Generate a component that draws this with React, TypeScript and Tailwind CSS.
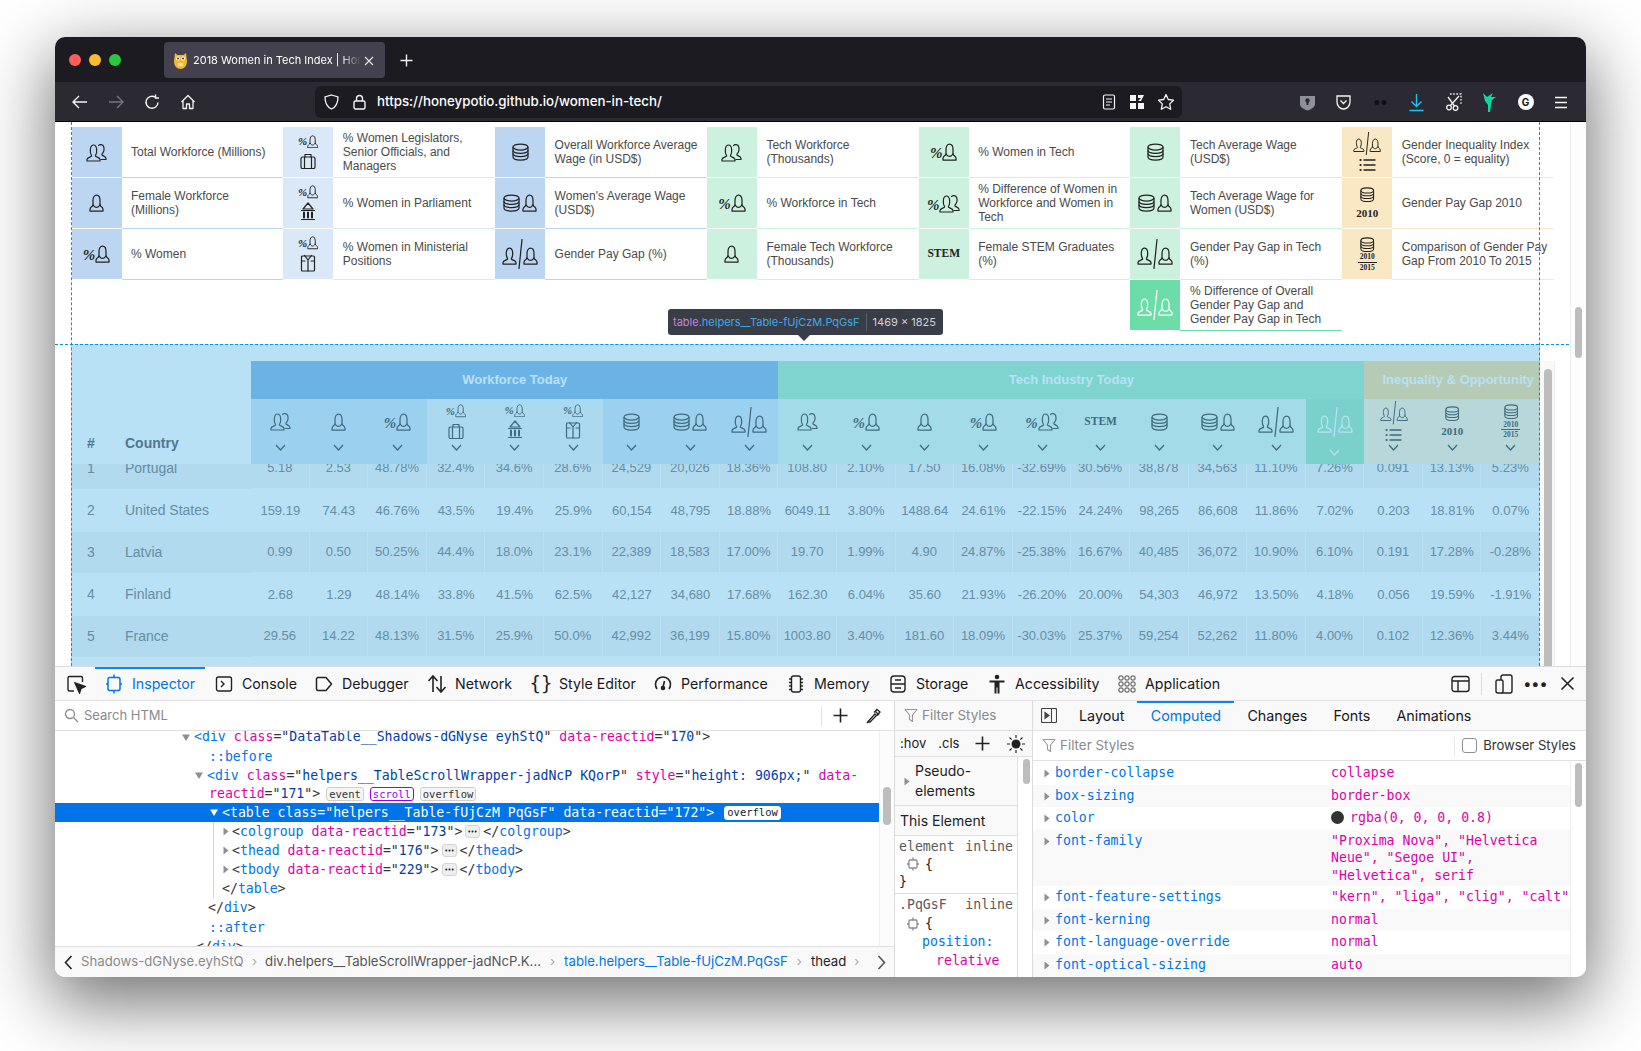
import React from "react";

const Sv = ({ w, h, children, sw = 1.2, className = "" }: { w: number; h: number; children: React.ReactNode; sw?: number; className?: string }) => (
  <svg width={w} height={h} viewBox={`0 0 ${w} ${h}`} fill="none" stroke="currentColor" strokeWidth={sw} strokeLinecap="round" strokeLinejoin="round" className={`shrink-0 ${className}`}>
    {children}
  </svg>
);
const WomanP = () => (
  <>
    <path d="M4 11.5V6.5C4 3.2 5.5 1 7.5 1S11 3.2 11 6.5V11.5" />
    <path d="M4 11C3.5 12.8 1 13 1 15.2V17H14V15.2C14 13 11.5 12.8 11 11" />
    <path d="M4.5 11.5C5.5 13 6.5 13.4 7.5 13.4S9.5 13 10.5 11.5" />
  </>
);
const ManP = () => <path d="M5.5 11.3C3.8 9 3.5 1 7.5 1S11.2 9 9.5 11.3V12.2C10.5 13.2 14 13.5 14 15.5V17H1V15.5C1 13.5 4.5 13.2 5.5 12.2Z" />;
const TwoP = () => (
  <>
    <g transform="translate(0 1)"><ManP /></g>
    <path d="M12.5 2.5C13.5 1.2 17 0.8 17.8 4 18.5 7 17.5 9.5 16 11V12C17 13 20 13.5 20 15.5V16.5H15" />
  </>
);
const CoinsP = () => (
  <>
    <ellipse cx="8.5" cy="4" rx="7.5" ry="3" />
    <path d="M1 4V14C1 15.7 4.4 17 8.5 17S16 15.7 16 14V4" />
    <path d="M1 7.3C1 9 4.4 10.3 8.5 10.3S16 9 16 7.3" />
    <path d="M1 10.6C1 12.3 4.4 13.6 8.5 13.6S16 12.3 16 10.6" />
  </>
);
const Woman = ({ s = 1 }: { s?: number }) => (
  <svg width={15 * s} height={18 * s} viewBox="0 0 15 18" fill="none" stroke="currentColor" strokeWidth={1.25} strokeLinecap="round" strokeLinejoin="round" className="shrink-0"><WomanP /></svg>
);
const Two = () => <Sv w={21} h={19}><TwoP /></Sv>;
const Coins = ({ s = 1 }: { s?: number }) => (
  <svg width={17 * s} height={18 * s} viewBox="0 0 17 18" fill="none" stroke="currentColor" strokeWidth={1.25} className="shrink-0"><CoinsP /></svg>
);
const Gap = ({ s = 1 }: { s?: number }) => (
  <svg width={36 * s} height={30 * s} viewBox="0 0 36 30" fill="none" stroke="currentColor" strokeWidth={1.25} strokeLinecap="round" strokeLinejoin="round" className="shrink-0">
    <g transform="translate(0 8)"><ManP /></g>
    <path d="M20 0.5L17 29.5" />
    <g transform="translate(21 8)"><WomanP /></g>
  </svg>
);
const Brief = () => (
  <Sv w={16} h={16}><rect x="1" y="4" width="14" height="11.5" rx="1.5" /><path d="M5 4V1.5H11V4M4.5 4V15.5M11.5 4V15.5" /></Sv>
);
const Bank = () => (
  <Sv w={16} h={19}><path d="M8 1L3 7H13Z" /><path d="M1.5 8.5H14.5M1.5 17.5H14.5" /><path d="M4 10.5V15.5M8 10.5V15.5M12 10.5V15.5" strokeWidth={2} /></Sv>
);
const Shirt = () => (
  <Sv w={16} h={18}><rect x="1.5" y="2" width="13" height="15" rx="1" /><path d="M4.5 1.5L8 6 11.5 1.5M8 6V17M1.5 7H5M11 7H14.5" /></Sv>
);
const ListI = () => (
  <Sv w={17} h={14} sw={1.4}><path d="M5 2H16M5 7H16M5 12H16" /><path d="M1.5 2H1.6M1.5 7H1.6M1.5 12H1.6" strokeWidth={2.2} /></Sv>
);
const Pct = ({ big = true }: { big?: boolean }) => (
  <span className={`font-['Liberation_Serif',serif] font-bold italic leading-none ${big ? "text-[15px]" : "text-[11px]"}`}>%</span>
);
const YearT = ({ c, t }: { c: string; t: string }) => <span className={`font-['Liberation_Serif',serif] font-bold leading-none ${c}`}>{t}</span>;

type Kind = "two" | "woman" | "pct" | "pctBrief" | "pctBank" | "pctShirt" | "coins" | "coinsW" | "gap" | "pctTwo" | "stem" | "gapList" | "c2010" | "c2015";

const SmallPct = () => (
  <div className="flex items-center"><Pct big={false} /><Woman s={0.75} /></div>
);
const Glyph = ({ k }: { k: Kind }) => {
  switch (k) {
    case "two": return <Two />;
    case "woman": return <Woman />;
    case "pct": return <div className="flex items-end"><Pct /><Woman /></div>;
    case "pctBrief": return <div className="flex flex-col items-center gap-[5px]"><SmallPct /><Brief /></div>;
    case "pctBank": return <div className="flex flex-col items-center gap-[3px]"><SmallPct /><Bank /></div>;
    case "pctShirt": return <div className="flex flex-col items-center gap-[4px]"><SmallPct /><Shirt /></div>;
    case "coins": return <Coins />;
    case "coinsW": return <div className="flex items-end gap-[2px]"><Coins /><Woman /></div>;
    case "gap": return <Gap />;
    case "pctTwo": return <div className="flex items-end"><Pct /><Two /></div>;
    case "stem": return <YearT c="text-[11.5px]" t="STEM" />;
    case "gapList": return <div className="flex flex-col items-center gap-[3px]"><Gap s={0.78} /><ListI /></div>;
    case "c2010": return <div className="flex flex-col items-center gap-[5px]"><Coins s={0.85} /><YearT c="text-[11px]" t="2010" /></div>;
    case "c2015": return (
      <div className="flex flex-col items-center gap-[1px]"><Coins s={0.85} /><YearT c="text-[7.5px]" t="2010" /><div className="w-[19px] h-px bg-current" /><YearT c="text-[7.5px]" t="2015" /></div>
    );
  }
};

const B1 = ["bg-[#bcd6f2]", "border-[#bcd6f2]"];
const B2 = ["bg-[#dbe8f8]", "border-[#dbe8f8]"];
const G1 = ["bg-[#ccf1df]", "border-[#ccf1df]"];
const Y1 = ["bg-[#fae8c4]", "border-[#fae8c4]"];
const legend: [Kind, string, string[]][] = [
  ["two", "Total Workforce (Millions)", B1], ["pctBrief", "% Women Legislators, Senior Officials, and Managers", B2], ["coins", "Overall Workforce Average Wage (in USD$)", B1], ["two", "Tech Workforce (Thousands)", G1], ["pct", "% Women in Tech", G1], ["coins", "Tech Average Wage (USD$)", G1], ["gapList", "Gender Inequality Index (Score, 0 = equality)", Y1],
  ["woman", "Female Workforce (Millions)", B1], ["pctBank", "% Women in Parliament", B2], ["coinsW", "Women's Average Wage (USD$)", B1], ["pct", "% Workforce in Tech", G1], ["pctTwo", "% Difference of Women in Workforce and Women in Tech", G1], ["coinsW", "Tech Average Wage for Women (USD$)", G1], ["c2010", "Gender Pay Gap 2010", Y1],
  ["pct", "% Women", B1], ["pctShirt", "% Women in Ministerial Positions", B2], ["gap", "Gender Pay Gap (%)", B1], ["woman", "Female Tech Workforce (Thousands)", G1], ["stem", "Female STEM Graduates (%)", G1], ["gap", "Gender Pay Gap in Tech (%)", G1], ["c2015", "Comparison of Gender Pay Gap From 2010 To 2015", Y1],
];

const heads: { k: Kind; bg: string; hi?: boolean }[] = [
  { k: "two", bg: "bg-[#d9e8f6]" }, { k: "woman", bg: "bg-[#d9e8f6]" }, { k: "pct", bg: "bg-[#d9e8f6]" },
  { k: "pctBrief", bg: "bg-[#edf5f7]" }, { k: "pctBank", bg: "bg-[#edf5f7]" }, { k: "pctShirt", bg: "bg-[#edf5f7]" },
  { k: "coins", bg: "bg-[#d9e8f6]" }, { k: "coinsW", bg: "bg-[#d9e8f6]" }, { k: "gap", bg: "bg-[#d9e8f6]" },
  { k: "two", bg: "bg-[#e2f8ec]" }, { k: "pct", bg: "bg-[#e2f8ec]" }, { k: "woman", bg: "bg-[#e2f8ec]" }, { k: "pct", bg: "bg-[#e2f8ec]" }, { k: "pctTwo", bg: "bg-[#e2f8ec]" }, { k: "stem", bg: "bg-[#e2f8ec]" }, { k: "coins", bg: "bg-[#e2f8ec]" }, { k: "coinsW", bg: "bg-[#e2f8ec]" }, { k: "gap", bg: "bg-[#e2f8ec]" },
  { k: "gap", bg: "bg-[#a9e9c4]", hi: true },
  { k: "gapList", bg: "bg-[#fef2d8]" }, { k: "c2010", bg: "bg-[#fef2d8]" }, { k: "c2015", bg: "bg-[#fef2d8]" },
];

const rows = [
  ["1", "Portugal", "5.18", "2.53", "48.78%", "32.4%", "34.6%", "28.6%", "24,529", "20,026", "18.36%", "108.80", "2.10%", "17.50", "16.08%", "-32.69%", "30.56%", "38,878", "34,563", "11.10%", "7.26%", "0.091", "13.13%", "5.23%"],
  ["2", "United States", "159.19", "74.43", "46.76%", "43.5%", "19.4%", "25.9%", "60,154", "48,795", "18.88%", "6049.11", "3.80%", "1488.64", "24.61%", "-22.15%", "24.24%", "98,265", "86,608", "11.86%", "7.02%", "0.203", "18.81%", "0.07%"],
  ["3", "Latvia", "0.99", "0.50", "50.25%", "44.4%", "18.0%", "23.1%", "22,389", "18,583", "17.00%", "19.70", "1.99%", "4.90", "24.87%", "-25.38%", "16.67%", "40,485", "36,072", "10.90%", "6.10%", "0.191", "17.28%", "-0.28%"],
  ["4", "Finland", "2.68", "1.29", "48.14%", "33.8%", "41.5%", "62.5%", "42,127", "34,680", "17.68%", "162.30", "6.04%", "35.60", "21.93%", "-26.20%", "20.00%", "54,303", "46,972", "13.50%", "4.18%", "0.056", "19.59%", "-1.91%"],
  ["5", "France", "29.56", "14.22", "48.13%", "31.5%", "25.9%", "50.0%", "42,992", "36,199", "15.80%", "1003.80", "3.40%", "181.60", "18.09%", "-30.03%", "25.37%", "59,254", "52,262", "11.80%", "4.00%", "0.102", "12.36%", "3.44%"],
];

const Chev = ({ c = "" }: { c?: string }) => (
  <svg width="11" height="7" viewBox="0 0 11 7" fill="none" stroke="currentColor" strokeWidth="1.2" className={c}><path d="M1 1L5.5 6 10 1" /></svg>
);

const T = ({ children }: { children: React.ReactNode }) => <span className="text-[#0074e8]">{children}</span>;
const A = ({ children }: { children: React.ReactNode }) => <span className="text-[#dd00a9]">{children}</span>;
const V = ({ children }: { children: React.ReactNode }) => <span className="text-[#003eaa]">{children}</span>;
const Tri = ({ open, c = "text-[#8f8f8f]" }: { open?: boolean; c?: string }) => (
  <svg width="8" height="9" viewBox="0 0 8 9" fill="currentColor" className={`shrink-0 ${c}`}>{open ? <path d="M0 1.5H8L4 8Z" /> : <path d="M1.5 0.5V8.5L6.5 4.5Z" />}</svg>
);
const Badge = ({ children, c = "border-[#cfcfcf] bg-[#f5f5f5] text-[#333]" }: { children: React.ReactNode; c?: string }) => (
  <span className={`inline-flex items-center h-[14px] px-[2px] ml-[6px] border rounded-[3px] text-[10.5px] leading-none ${c}`}>{children}</span>
);
const Dots = () => (
  <span className="inline-flex items-center justify-center w-[15px] h-[13px] mx-[1px] rounded-[3px] border border-[#d5d5d5] bg-[#eee]">
    <svg width="9" height="3" viewBox="0 0 9 3" fill="#222"><circle cx="1.3" cy="1.5" r="1" /><circle cx="4.500" cy="1.5" r="1" /><circle cx="7.700" cy="1.5" r="1" /></svg>
  </span>
);
const Funnel = () => (
  <svg width="14" height="15" viewBox="0 0 14 15" fill="none" stroke="#9a9a9a" strokeWidth="1.1" strokeLinejoin="round" className="shrink-0"><path d="M1 1.5H13L8.5 7V13.5L5.5 11.5V7Z" /></svg>
);
const NodeI = () => (
  <svg width="12" height="14" viewBox="0 0 12 14" fill="none" stroke="#8a8a8a" strokeWidth="1.3" className="shrink-0"><rect x="2" y="3" width="8" height="8" rx="1" /><path d="M6 0.5V3M6 11V13.5M0 7H2M10 7H12" /></svg>
);

const Tab = ({ w, icon, label, active }: { w: number; icon: React.ReactNode; label: string; active?: boolean }) => (
  <div style={{ width: w }} className={`relative flex items-center h-full shrink-0 pl-[9px] gap-[8px] ${active ? "text-[#0074e8]" : "text-[#18181a]"}`}>
    {active && <div className="absolute left-0 right-0 top-0 h-[2px] bg-[#0a84ff]" />}
    <span className="flex w-[20px] justify-center shrink-0">{icon}</span>
    <span>{label}</span>
  </div>
);

const comp: [string, string[], boolean][] = [
  ["border-collapse", ["collapse"], false],
  ["box-sizing", ["border-box"], true],
  ["color", ["rgba(0, 0, 0, 0.8)"], false],
  ["font-family", ['"Proxima Nova", "Helvetica', 'Neue", "Segoe UI",', '"Helvetica", serif'], true],
  ["font-feature-settings", ['"kern", "liga", "clig", "calt"'], false],
  ["font-kerning", ["normal"], true],
  ["font-language-override", ["normal"], false],
  ["font-optical-sizing", ["auto"], true],
];

export default function App() {
  return (
    <div className="w-[1641px] h-[1051px] overflow-hidden bg-white pt-[37px] pl-[55px]">
      <div className="w-[1531px] h-[940px] flex flex-col rounded-[10px] overflow-hidden shadow-[0_22px_70px_4px_rgba(0,0,0,0.56)] bg-white font-['Inter',sans-serif]">
        {/* tab bar */}
        <div className="h-[45px] shrink-0 bg-[#1c1b22] flex items-start relative">
          <div className="flex items-center gap-[8px] pl-[14px] h-[45px] shrink-0">
            <span className="w-[12px] h-[12px] rounded-full bg-[#ff5f57] mt-[1px]" />
            <span className="w-[12px] h-[12px] rounded-full bg-[#febc2e] mt-[1px]" />
            <span className="w-[12px] h-[12px] rounded-full bg-[#28c840] mt-[1px]" />
          </div>
          <div className="ml-[43px] mt-[5px] w-[221px] h-[36px] bg-[#42414d] rounded-[4px] flex items-center pl-[9px] pr-[11px] pt-[1px] text-white text-[11px] shrink-0">
            <svg width="15" height="19" viewBox="0 0 15 19" className="shrink-0">
              <path d="M2 2L4.5 4H10.5L13 2 14 10C14 15 11 18 7.500 18S1 15 1 10Z" fill="#f5b731" />
              <circle cx="5" cy="7.500" r="2" fill="#fff" /><circle cx="10" cy="7.500" r="2" fill="#fff" />
              <circle cx="5" cy="7.500" r="1" fill="#333" /><circle cx="10" cy="7.500" r="1" fill="#333" />
              <path d="M5 12H10V15H5Z" fill="#fbe2a0" />
            </svg>
            <span className="ml-[5px] w-[168px] overflow-hidden whitespace-nowrap [mask-image:linear-gradient(to_right,black_88%,transparent)]">2018 Women in Tech Index | Honeypot</span>
            <svg width="10" height="10" viewBox="0 0 10 10" stroke="#e8e8e8" strokeWidth="1.1" className="ml-auto shrink-0"><path d="M1 1L9 9M9 1L1 9" /></svg>
          </div>
          <svg width="13" height="13" viewBox="0 0 13 13" stroke="#f0f0f0" strokeWidth="1.4" className="ml-[15px] mt-[17px]"><path d="M6.500 0.500V12.500M0.500 6.500H12.500" /></svg>
        </div>
        {/* nav bar */}
        <div className="h-[40px] shrink-0 bg-[#2b2a33] border-b border-black flex items-center pt-[1px] text-[#f5f5f5]">
          <div className="flex items-center gap-[20px] pl-[17px] w-[260px] shrink-0">
            <svg width="16" height="14" viewBox="0 0 16 14" fill="none" stroke="currentColor" strokeWidth="1.4"><path d="M15 7H1.500M7 1L1 7l6 6" /></svg>
            <svg width="16" height="14" viewBox="0 0 16 14" fill="none" stroke="#77767e" strokeWidth="1.4"><path d="M1 7H14.500M9 1l6 6-6 6" /></svg>
            <svg width="16" height="16" viewBox="0 0 16 16" fill="none" stroke="currentColor" strokeWidth="1.4"><path d="M14 8.500A6 6 0 1 1 11 3M11.500 0.500V4H15" /></svg>
            <svg width="16" height="16" viewBox="0 0 16 16" fill="none" stroke="currentColor" strokeWidth="1.3" strokeLinejoin="round"><path d="M1.500 8L8 1.500 14.500 8M3 7V14.500H6.500V10H9.500V14.500H13V7" /></svg>
          </div>
          <div className="h-[32px] w-[867px] shrink-0 bg-[#1c1b22] rounded-[6px] flex items-center pl-[9px] pr-[7px]">
            <svg width="15" height="16" viewBox="0 0 15 16" fill="none" stroke="currentColor" strokeWidth="1.3" className="shrink-0"><path d="M7.500 1L14 3C14 9 12 13 7.500 15 3 13 1 9 1 3Z" /></svg>
            <svg width="13" height="16" viewBox="0 0 13 16" fill="none" stroke="currentColor" strokeWidth="1.4" className="shrink-0 ml-[14px]"><rect x="1" y="7" width="11" height="8" rx="1.500" /><path d="M3.500 7V4.500a3 3 0 0 1 6 0V7" /></svg>
            <span className="ml-[11px] text-[13.3px] font-medium text-white">https://honeypotio.github.io/women-in-tech/</span>
            <div className="ml-auto flex items-center gap-[12px]">
              <svg width="16" height="16" viewBox="0 0 16 16" fill="none" stroke="currentColor" strokeWidth="1.2"><rect x="2.500" y="1" width="11" height="14" rx="1.500" /><path d="M5 5H11M5 8H11M5 11H9" /></svg>
              <svg width="16" height="16" viewBox="0 0 16 16" fill="currentColor"><path d="M1 1H7V7H1ZM1 9H7V15H1ZM9 9H15V15H9ZM9 7L12 4H9V1L15 1 12 7Z" /></svg>
              <svg width="18" height="18" viewBox="0 0 18 18" fill="none" stroke="currentColor" strokeWidth="1.3" strokeLinejoin="round"><path d="M9 1.500L11.300 6.500 16.500 7.200 12.700 10.900 13.700 16.300 9 13.700 4.300 16.300 5.300 10.900 1.500 7.200 6.700 6.500Z" /></svg>
            </div>
          </div>
          <div className="flex-1 flex items-center justify-end gap-[19.5px] pr-[17px]">
            <svg width="17" height="17" viewBox="0 0 17 17" fill="#8f8f96"><path d="M1 2H16V10C16 13 13 15 8.500 16.500 4 15 1 13 1 10Z" /><circle cx="8.500" cy="6.500" r="2.200" fill="#2b2a33" /><path d="M7.500 7H9.500V11H7.500Z" fill="#2b2a33" /></svg>
            <svg width="17" height="17" viewBox="0 0 17 17" fill="none" stroke="currentColor" strokeWidth="1.3"><path d="M2 2H15a1 1 0 0 1 0 1V8C15 12 12 15 8.500 15S2 12 2 8V3Z" /><path d="M5.500 6.500L8.500 9.500 11.500 6.500" /></svg>
            <svg width="17" height="17" viewBox="0 0 17 17" fill="#101014"><circle cx="5" cy="8.500" r="2.500" /><circle cx="12" cy="8.500" r="2.500" /></svg>
            <svg width="17" height="19" viewBox="0 0 17 19" fill="none" stroke="#20c4f4" strokeWidth="1.4"><path d="M8.500 1V13M3.500 8.500L8.500 13.500 13.500 8.500M1.500 17.500H15.500" /></svg>
            <svg width="17" height="18" viewBox="0 0 17 18" fill="none" stroke="currentColor" strokeWidth="1.3"><path d="M5 1H16V11" strokeDasharray="1.600 1.600" /><circle cx="4" cy="14.500" r="2.300" /><circle cx="10.500" cy="15" r="2.300" /><path d="M5.500 12.500L14 3M9.500 13L3 4" /></svg>
            <svg width="17" height="21" viewBox="0 0 17 21" fill="#12d6a0"><path d="M2 1L6 5 9 3 12 1 10 5 15 5 11 8 10 13 9 20 7 20 7 13 4 9Z" /></svg>
            <span className="w-[16px] h-[16px] rounded-full bg-white text-[#111] text-[10px] font-bold flex items-center justify-center">G</span>
            <svg width="16" height="13" viewBox="0 0 16 13" stroke="currentColor" strokeWidth="1.4"><path d="M2 1.500H14M2 6.500H14M2 11.500H14" /></svg>
          </div>
        </div>

        {/* page */}
        <div className="relative h-[544px] shrink-0 overflow-hidden bg-white font-['Liberation_Sans',Arial,sans-serif]">
          <div className="pl-[16.5px] pt-[5px] h-[209px]">
            <div className="grid grid-cols-[repeat(7,211.800px)] auto-rows-[51px] text-[12px] leading-[14px] text-[#4a4a4a]">
              {legend.map(([k, t, [bg, bd]], i) => (
                <div key={i} className="flex">
                  <div className={`w-[50px] h-[50px] shrink-0 flex items-center justify-center text-[#222] ${bg}`}><Glyph k={k} /></div>
                  <div className={`flex-1 h-[51px] border-b ${bd} pl-[9.5px] pr-[5px] flex items-center`}><span>{t}</span></div>
                </div>
              ))}
              <div className="flex col-start-6">
                <div className="w-[50px] h-[50px] shrink-0 flex items-center justify-center text-white bg-[#6cdca8]"><Gap /></div>
                <div className="flex-1 h-[51px] border-b border-[#6cdca8] pl-[9.5px] pr-[5px] flex items-center"><span>% Difference of Overall Gender Pay Gap and Gender Pay Gap in Tech</span></div>
              </div>
            </div>
          </div>
          {/* table */}
          <div className="mt-[14px] ml-[16px] flex">
            <div className="w-[1469px] shrink-0">
              <div className="relative z-10 bg-white pt-[16px]">
                <div className="grid grid-cols-[180px_repeat(22,58.600px)] h-[38px] text-white text-[13px] font-bold">
                  <div />
                  <div className="col-span-9 bg-[#96bfe8] flex items-center justify-center">Workforce Today</div>
                  <div className="col-span-10 bg-[#b0eeca] flex items-center justify-center">Tech Industry Today</div>
                  <div className="col-span-3 bg-[#fbe1a5] flex items-center justify-end pr-[6px] whitespace-nowrap">Inequality &amp; Opportunity</div>
                </div>
                <div className="grid grid-cols-[180px_repeat(22,58.600px)] h-[65px]">
                  <div className="flex items-end pb-[10px] text-[14px] font-bold text-[#6e6e6e]">
                    <span className="w-[54px] pl-[16px]">#</span><span>Country</span>
                  </div>
                  {heads.map((h, i) => (
                    <div key={i} className={`flex flex-col items-center ${h.bg} ${h.hi ? "text-white" : "text-[#5a5a5a]"}`}>
                      <div className="h-[45px] flex items-center justify-center"><Glyph k={h.k} /></div>
                      <Chev c={h.hi ? "mt-[5px]" : "mt-0"} />
                    </div>
                  ))}
                </div>
              </div>
              <div className="-mt-[16px] text-[#8c8c8c]">
                {rows.map((r, i) => (
                  <div key={i} className={`grid grid-cols-[180px_repeat(22,58.600px)] ${i % 2 === 0 ? "h-[41px]" : "h-[43px]"}`}>
                    <div className={`flex items-center text-[14px] ${i % 2 === 0 ? "bg-[#f5f5f5]" : ""}`}>
                      <span className="w-[54px] pl-[16px]">{r[0]}</span><span>{r[1]}</span>
                    </div>
                    {r.slice(2).map((v, j) => (
                      <div key={j} className={`flex items-center justify-center text-[13px] whitespace-nowrap ${i % 2 === 0 ? "bg-[#f5f5f5] border-r border-b border-white" : ""}`}>{v}</div>
                    ))}
                  </div>
                ))}
              </div>
            </div>
            <div className="w-[15px] shrink-0 mt-[16px] h-[400px] bg-[#f9f9f9] border-r border-[#eeeeee] pl-[4px] pt-[8px]">
              <div className="w-[8px] h-[360px] rounded-full bg-[#bdbdbd]" />
            </div>
          </div>
          {/* page scrollbar */}
          <div className="absolute right-0 top-0 bottom-0 w-[16px] bg-[#fdfdfd] border-l border-[#eeeeee] z-10">
            <div className="absolute left-[4px] top-[185px] w-[7px] h-[51px] rounded-full bg-[#bdbdbd]" />
          </div>
          {/* highlighter */}
          <div className="absolute left-[16px] top-[222px] w-[1469px] bottom-0 bg-[rgba(0,149,221,0.28)] z-20" />
          <div className="absolute left-0 top-[222px] w-[1514px] border-t border-dashed border-[#0095dd] z-20" />
          <div className="absolute left-[16px] top-0 bottom-0 border-l border-dashed border-[#0095dd] z-20" />
          <div className="absolute left-[1484px] top-0 bottom-0 border-l border-dashed border-[#0095dd] z-20" />
          <div className="absolute left-[613px] top-[187px] h-[26px] w-[275px] bg-[#383d48] rounded-[3px] z-30 flex items-center pl-[5px] text-[11px] font-['Inter',sans-serif] whitespace-nowrap">
            <span className="text-[#c982dd]">table</span><span className="text-[#45a8e6]">.helpers__Table-fUjCzM.PqGsF</span>
            <span className="w-px h-[18px] bg-[#5a5f6a] mx-[6px]" />
            <span className="text-[#d4d4d4]">1469 × 1825</span>
            <div className="absolute left-[130px] top-[26px] w-0 h-0 border-x-[6px] border-x-transparent border-t-[6px] border-t-[#383d48]" />
          </div>
        </div>

        {/* devtools */}
        <div className="flex-1 min-h-0 flex flex-col bg-white border-t border-[#dcdcdc]">
          <div className="h-[34px] shrink-0 bg-[#f9f9fa] border-b border-[#e0e0e2] flex items-center text-[14.2px] text-[#18181a]">
            <div className="w-[40px] shrink-0 pl-[11px]">
              <svg width="20" height="20" viewBox="0 0 20 20" fill="none" stroke="#222" strokeWidth="1.4"><path d="M8 17H3.500A1.500 1.500 0 0 1 2 15.500V4A1.500 1.500 0 0 1 3.500 2.500H15A1.500 1.500 0 0 1 16.500 4V8" /><path d="M9 9L19 12.500 15 14.500 13.500 19Z" fill="#222" /></svg>
            </div>
            <Tab w={110} active label="Inspector" icon={<svg width="16" height="20" viewBox="0 0 16 20" fill="none" stroke="currentColor" strokeWidth="1.5"><rect x="2" y="3.500" width="12" height="13" rx="1.500" /><path d="M8 0.500V3.500M8 16.500V19.500M0 10H2M14 10H16" /></svg>} />
            <Tab w={100} label="Console" icon={<svg width="18" height="18" viewBox="0 0 18 18" fill="none" stroke="#222" strokeWidth="1.4"><rect x="1.500" y="2" width="15" height="14" rx="2" /><path d="M6 6L9 9 6 12" /></svg>} />
            <Tab w={113} label="Debugger" icon={<svg width="18" height="16" viewBox="0 0 18 16" fill="none" stroke="#222" strokeWidth="1.5" strokeLinejoin="round"><path d="M3 1.500H11L16.500 8 11 14.500H3A1.500 1.500 0 0 1 1.500 13V3A1.500 1.500 0 0 1 3 1.500Z" /></svg>} />
            <Tab w={104} label="Network" icon={<svg width="20" height="20" viewBox="0 0 20 20" fill="none" stroke="#222" strokeWidth="1.6"><path d="M6 18V2M1.500 7L6 2 10.500 7M14 2V18M9.500 13L14 18 18.500 13" /></svg>} />
            <Tab w={122} label="Style Editor" icon={<span className="text-[#222] text-[19px] leading-none font-['DejaVu_Sans_Mono',monospace]">{"{}"}</span>} />
            <Tab w={133} label="Performance" icon={<svg width="20" height="20" viewBox="0 0 20 20" fill="none" stroke="#222" strokeWidth="1.6"><path d="M4 15A7.500 7.500 0 1 1 16 15M10 13L11.500 7" /><circle cx="10" cy="14" r="1.500" fill="#222" /></svg>} />
            <Tab w={102} label="Memory" icon={<svg width="20" height="20" viewBox="0 0 20 20" fill="none" stroke="#222" strokeWidth="1.4"><rect x="5.500" y="2" width="9" height="16" rx="2" /><path d="M3 5H5.500M3 8.500H5.500M3 12H5.500M3 15.500H5.500M14.500 5H17M14.500 8.500H17M14.500 12H17M14.500 15.500H17" /></svg>} />
            <Tab w={99} label="Storage" icon={<svg width="16" height="20" viewBox="0 0 16 20" fill="none" stroke="#222" strokeWidth="1.4"><rect x="1" y="2" width="14" height="16" rx="3" /><path d="M1 10H15M5 6H11M5 14H11" /></svg>} />
            <Tab w={130} label="Accessibility" icon={<svg width="16" height="20" viewBox="0 0 16 20" fill="#222"><circle cx="8" cy="3" r="2.300" /><path d="M0.500 6.500H15.500V8.500H10.500V19.500H8.500V13.500H7.500V19.500H5.500V8.500H0.500Z" /></svg>} />
            <Tab w={150} label="Application" icon={<svg width="18" height="18" viewBox="0 0 18 18" fill="none" stroke="#444" strokeWidth="1"><rect x="1" y="1" width="4" height="4" rx="1" /><rect x="7" y="1" width="4" height="4" rx="1" /><rect x="13" y="1" width="4" height="4" rx="1" /><rect x="1" y="7" width="4" height="4" rx="1" /><rect x="7" y="7" width="4" height="4" rx="1" /><rect x="13" y="7" width="4" height="4" rx="1" /><rect x="1" y="13" width="4" height="4" rx="1" /><rect x="7" y="13" width="4" height="4" rx="1" /><rect x="13" y="13" width="4" height="4" rx="1" /></svg>} />
            <div className="ml-auto flex items-center pr-[11px]">
              <svg width="19" height="18" viewBox="0 0 19 18" fill="none" stroke="#222" strokeWidth="1.4"><rect x="1" y="1.500" width="17" height="15" rx="2.500" /><path d="M1 6H18M7 6V16.500" /></svg>
              <span className="w-px h-[22px] bg-[#dcdcdc] ml-[11px] mr-[13px]" />
              <svg width="18" height="20" viewBox="0 0 18 20" fill="none" stroke="#222" strokeWidth="1.4"><rect x="6" y="1" width="11" height="18" rx="2" /><rect x="1" y="6" width="7" height="13" rx="1.500" fill="#f9f9fa" /></svg>
              <span className="ml-[11px] text-[#222] tracking-[1px] text-[15px] leading-none font-bold">•••</span>
              <svg width="15" height="15" viewBox="0 0 15 15" stroke="#222" strokeWidth="1.6" className="ml-[12px]"><path d="M1.500 1.500L13.500 13.500M13.500 1.500L1.500 13.500" /></svg>
            </div>
          </div>
          <div className="flex-1 min-h-0 flex">
            {/* markup */}
            <div className="w-[840px] shrink-0 flex flex-col border-r border-[#dcdcdc] min-h-0">
              <div className="h-[30px] shrink-0 border-b border-[#e0e0e2] flex items-center pl-[9px] text-[13px] text-[#8a8a8a]">
                <svg width="15" height="15" viewBox="0 0 15 15" fill="none" stroke="#8a8a8a" strokeWidth="1.3"><circle cx="6" cy="6" r="4.500" /><path d="M9.500 9.500L14 14" /></svg>
                <span className="ml-[5px]">Search HTML</span>
                <div className="ml-auto flex items-center h-full">
                  <span className="w-px h-[20px] bg-[#e0e0e2]" />
                  <svg width="15" height="15" viewBox="0 0 15 15" stroke="#222" strokeWidth="1.6" className="ml-[11px]"><path d="M7.500 0.500V14.500M0.500 7.500H14.500" /></svg>
                  <svg width="15" height="16" viewBox="0 0 15 16" fill="none" stroke="#222" strokeWidth="1.3" className="ml-[18px] mr-[13px]"><path d="M2 14L1 15 2.500 13 9 6 10.500 7.500 4 14ZM8 4.500L11 1.500 14 4 11 7.500" /><path d="M9 3L13 7" /></svg>
                </div>
              </div>
              <div className="flex-1 min-h-0 flex">
                <div className="flex-1 min-w-0 flex flex-col">
                  <div className="flex-1 min-h-0 overflow-hidden">
                    <div className="-mt-[4px] font-['DejaVu_Sans_Mono',monospace] text-[13.200px] text-[#333] whitespace-pre">
                      <div className="h-[20px] flex items-center pl-[127px] gap-[4px]"><Tri open /><span><T>{"<div "}</T><A>class</A>="<V>DataTable__Shadows-dGNyse eyhStQ</V>" <A>data-reactid</A>="<V>170</V>"{">"}</span></div>
                      <div className="h-[19px] flex items-center pl-[154px]"><T>::before</T></div>
                      <div className="h-[19px] flex items-center pl-[140px] gap-[4px]"><Tri open /><span><T>{"<div "}</T><A>class</A>="<V>helpers__TableScrollWrapper-jadNcP KQorP</V>" <A>style</A>="<V>height: 906px;</V>" <A>data-</A></span></div>
                      <div className="h-[18px] flex items-center pl-[154px]"><A>reactid</A>="<V>171</V>"{">"}<Badge>event</Badge><Badge c="border-[#9400ff] bg-white text-[#9400ff]">scroll</Badge><Badge>overflow</Badge></div>
                      <div className="h-[19px] flex items-center pl-[155px] gap-[4px] bg-[#0074e8] text-white"><Tri open c="text-white" /><span>{'<table class="helpers__Table-fUjCzM PqGsF" data-reactid="172">'}</span><Badge c="border-white bg-white text-[#222]">overflow</Badge></div>
                      <div className="ml-[158px] border-l border-[#d5d5d5]">
                        <div className="h-[19px] flex items-center pl-[8px] gap-[2px]"><Tri /><span>{"<"}<T>colgroup</T> <A>data-reactid</A>="<V>173</V>"{">"}</span><Dots /><span>{"</"}<T>colgroup</T>{">"}</span></div>
                        <div className="h-[19px] flex items-center pl-[8px] gap-[2px]"><Tri /><span>{"<"}<T>thead</T> <A>data-reactid</A>="<V>176</V>"{">"}</span><Dots /><span>{"</"}<T>thead</T>{">"}</span></div>
                        <div className="h-[19px] flex items-center pl-[8px] gap-[2px]"><Tri /><span>{"<"}<T>tbody</T> <A>data-reactid</A>="<V>229</V>"{">"}</span><Dots /><span>{"</"}<T>tbody</T>{">"}</span></div>
                        <div className="h-[19px] flex items-center pl-[8px]"><span>{"</"}<T>table</T>{">"}</span></div>
                      </div>
                      <div className="h-[20px] flex items-center pl-[153px]"><span>{"</"}<T>div</T>{">"}</span></div>
                      <div className="h-[19px] flex items-center pl-[154px]"><T>::after</T></div>
                      <div className="h-[19px] flex items-center pl-[141px]"><span>{"</"}<T>div</T>{">"}</span></div>
                    </div>
                  </div>
                </div>
                <div className="w-[15px] shrink-0 border-l border-[#eeeeee] bg-[#fcfcfc] pl-[3px] pt-[56px]">
                  <div className="w-[8px] h-[38px] rounded-full bg-[#bdbdbd]" />
                </div>
              </div>
              <div className="h-[31px] shrink-0 border-t border-[#e0e0e2] flex items-center text-[13.200px] whitespace-nowrap overflow-hidden relative z-10 bg-[#f9f9fa]">
                <svg width="9" height="15" viewBox="0 0 9 15" fill="none" stroke="#222" strokeWidth="1.600" className="ml-[9px] shrink-0"><path d="M7.500 1L1.500 7.500 7.500 14" /></svg>
                <span className="ml-[8px] w-[163px] text-[#8a8a8a] overflow-hidden shrink-0">Shadows-dGNyse.eyhStQ</span>
                <span className="mx-[8px] text-[#aaa]">›</span>
                <span className="text-[#555]">div.helpers__TableScrollWrapper-jadNcP.K...</span>
                <span className="mx-[9px] text-[#aaa]">›</span>
                <span className="text-[#0074e8]">table.helpers__Table-fUjCzM.PqGsF</span>
                <span className="mx-[9px] text-[#aaa]">›</span>
                <span className="text-[#222]">thead</span>
                <span className="mx-[8px] text-[#aaa]">›</span>
                <svg width="9" height="15" viewBox="0 0 9 15" fill="none" stroke="#555" strokeWidth="1.600" className="ml-auto mr-[8px] shrink-0"><path d="M1.500 1L7.500 7.500 1.500 14" /></svg>
              </div>
            </div>
            {/* rules */}
            <div className="w-[138px] shrink-0 flex flex-col min-h-0 border-r border-[#dcdcdc] overflow-hidden bg-white">
              <div className="h-[30px] shrink-0 border-b border-[#e0e0e2] bg-[#f9f9fa] flex items-center pl-[9px] gap-[4px] text-[13.4px] text-[#8a8a8a] whitespace-nowrap"><Funnel />Filter Styles</div>
              <div className="h-[26px] shrink-0 border-b border-[#e0e0e2] bg-[#f9f9fa] flex items-center pl-[5px] text-[13px] text-[#222]">
                <span>:hov</span><span className="ml-[12px]">.cls</span>
                <svg width="15" height="15" viewBox="0 0 15 15" stroke="#222" strokeWidth="1.600" className="ml-[16px] shrink-0"><path d="M7.500 0.500V14.500M0.500 7.500H14.500" /></svg>
                <svg width="18" height="18" viewBox="0 0 18 18" fill="#222" className="ml-[17px] shrink-0"><circle cx="9" cy="9" r="4.500" /><path d="M9 0V3M9 15V18M0 9H3M15 9H18M2.500 2.500L4.700 4.700M13.300 13.300L15.500 15.500M2.500 15.500L4.700 13.300M13.300 4.700L15.500 2.500" stroke="#222" strokeWidth="1.200" /></svg>
              </div>
              <div className="flex-1 min-h-0 flex">
                <div className="w-[123px] shrink-0 border-r border-[#e0e0e2] overflow-hidden text-[14px] text-[#222]">
                  <div className="h-[49px] border-b border-[#e0e0e2] bg-[#f9f9fa] flex items-center pl-[8px] gap-[4px] leading-[20px]"><Tri /><span>Pseudo-<br />elements</span></div>
                  <div className="h-[30px] border-b border-[#e0e0e2] bg-[#f9f9fa] flex items-center pl-[5px] text-[14px]">This Element</div>
                  <div className="h-[58px] border-b border-[#e0e0e2] font-['DejaVu_Sans_Mono',monospace] text-[13.200px] leading-[17.500px] pt-[2px] px-[4px] whitespace-pre">
                    <div className="flex justify-between text-[#5a5a5a]"><span>element</span><span>inline</span></div>
                    <div className="flex items-center pl-[8px] gap-[6px]"><NodeI /><span>{"{"}</span></div>
                    <div>{"}"}</div>
                  </div>
                  <div className="font-['DejaVu_Sans_Mono',monospace] text-[13.200px] leading-[18.500px] pt-[2px] px-[4px] whitespace-pre">
                    <div className="flex justify-between text-[#5a5a5a]"><span>.PqGsF</span><span>inline</span></div>
                    <div className="flex items-center pl-[8px] gap-[6px]"><NodeI /><span>{"{"}</span></div>
                    <div className="pl-[23px] text-[#0074e8]">position:</div>
                    <div className="pl-[37px] text-[#dd00a9]">relative</div>
                  </div>
                </div>
                <div className="flex-1 pl-[5px] pt-[2px]"><div className="w-[7px] h-[25px] rounded-full bg-[#bdbdbd]" /></div>
              </div>
            </div>
            {/* computed */}
            <div className="flex-1 min-w-0 flex flex-col min-h-0 overflow-hidden">
              <div className="h-[30px] shrink-0 border-b border-[#e0e0e2] bg-[#f9f9fa] flex items-center text-[14.3px] text-[#18181a]">
                <svg width="16" height="15" viewBox="0 0 16 15" fill="none" stroke="#444" strokeWidth="1.100" className="ml-[8px]"><rect x="0.500" y="0.500" width="15" height="14" rx="1" /><path d="M10.500 0.500V14.500" /><path d="M4 4.500L8 7.500 4 10.500Z" fill="#444" /></svg>
                <span className="ml-[22px]">Layout</span>
                <div className="relative ml-[13px] h-full w-[97px] flex items-center justify-center text-[#0074e8]"><div className="absolute top-0 inset-x-0 h-[2px] bg-[#0a84ff]" />Computed</div>
                <span className="ml-[13px]">Changes</span>
                <span className="ml-[26px]">Fonts</span>
                <span className="ml-[26px]">Animations</span>
              </div>
              <div className="h-[30px] shrink-0 border-b border-[#e0e0e2] bg-white flex items-center pl-[9px] gap-[4px] text-[13.4px] text-[#8a8a8a]">
                <Funnel />Filter Styles
                <div className="ml-auto flex items-center h-full pr-[10px]">
                  <span className="w-px h-[20px] bg-[#e8e8e8]" />
                  <span className="ml-[7px] w-[15px] h-[15px] rounded-[3px] border border-[#8f8f8f]" />
                  <span className="ml-[6px] text-[#333] text-[13.1px]">Browser Styles</span>
                </div>
              </div>
              <div className="flex-1 min-h-0 flex">
                <div className="w-[537px] shrink-0 overflow-hidden font-['DejaVu_Sans_Mono',monospace] text-[13.200px] pt-[1px]">
                  {comp.map(([n, v, alt], i) => (
                    <div key={i} className={`flex pt-[2px] pb-[2px] ${alt ? "bg-[#f9f9fa]" : ""}`}>
                      <div className="w-[298px] shrink-0 flex items-start pl-[10px] gap-[4px] h-[18.600px] leading-[18.600px] text-[#0074e8]"><span className="mt-[5px]"><Tri /></span><span>{n}</span></div>
                      <div className="text-[#dd00a9] leading-[17.500px] whitespace-pre">
                        {n === "color" ? (
                          <div className="flex items-center"><span className="w-[13px] h-[13px] rounded-full bg-[#333] mr-[6px]" />{v[0]}</div>
                        ) : (
                          v.map((l) => <div key={l}>{l}</div>)
                        )}
                      </div>
                    </div>
                  ))}
                </div>
                <div className="flex-1 border-l border-[#eeeeee] pl-[4px] pt-[2px]"><div className="w-[7px] h-[44px] rounded-full bg-[#bdbdbd]" /></div>
              </div>
            </div>
          </div>
        </div>
      </div>
    </div>
  );
}
